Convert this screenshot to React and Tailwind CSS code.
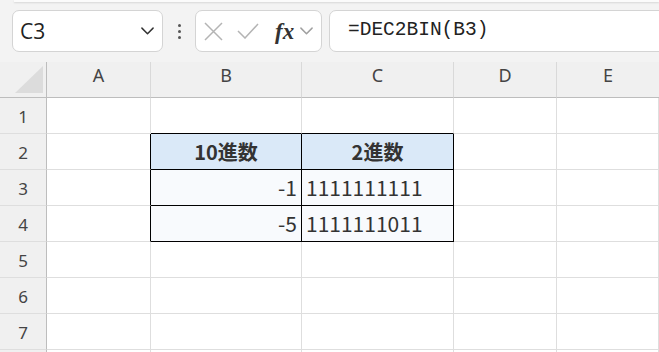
import React from "react";

const jp = { fontFamily: '"Noto Sans CJK JP", "Noto Sans", sans-serif' };

function Chevron({ className, color = "#333", w = 14 }) {
  return (
    <svg width={w} height={w * 0.6} viewBox="0 0 14 8" className={className}>
      <path d="M1 1 L7 7 L13 1" fill="none" stroke={color} strokeWidth="1.6" strokeLinecap="round" strokeLinejoin="round" />
    </svg>
  );
}

export default function App() {
  const cols = ["A", "B", "C", "D", "E"];
  const rows = [1, 2, 3, 4, 5, 6, 7, 8];
  const cellContent = (r, c) => {
    if (r === 2 && c === "B") return { text: "10進数", kind: "head" };
    if (r === 2 && c === "C") return { text: "2進数", kind: "head" };
    if (r === 3 && c === "B") return { text: "-1", kind: "num" };
    if (r === 4 && c === "B") return { text: "-5", kind: "num" };
    if (r === 3 && c === "C") return { text: "1111111111", kind: "txt" };
    if (r === 4 && c === "C") return { text: "1111111011", kind: "txt" };
    return null;
  };
  const inTable = (r, c) => r >= 2 && r <= 4 && (c === "B" || c === "C");

  return (
    <div className="w-[659px] h-[352px] overflow-hidden bg-white" style={{ fontFamily: '"Noto Sans", "Liberation Sans", sans-serif' }}>
      {/* toolbar */}
      <div className="h-[62px] bg-[#f3f3f3] flex flex-col overflow-hidden">
        <div className="h-[2px] ml-[14px] shrink-0 bg-[#fbfbfb] shadow-[0_1px_2px_rgba(0,0,0,0.12)]" />
        <div className="flex items-start pt-[8px] pl-[12px]">
          <div className="shrink-0 w-[151px] h-[42px] bg-white border border-[#d4d4d4] rounded-[7px] flex items-center justify-between pl-[7px] pr-[8px]">
            <span className="text-[21px] text-[#222] leading-none" style={{ fontFamily: '"Open Sans", "Noto Sans", sans-serif' }}>C3</span>
            <Chevron color="#333" w={13} />
          </div>
          <div className="shrink-0 w-[32px] h-[42px] flex flex-col items-center justify-center gap-[3px]">
            <div className="w-[3px] h-[3px] rounded-full bg-[#555]" />
            <div className="w-[3px] h-[3px] rounded-full bg-[#555]" />
            <div className="w-[3px] h-[3px] rounded-full bg-[#555]" />
          </div>
          <div className="shrink-0 w-[127px] h-[42px] bg-white border border-[#d4d4d4] rounded-[7px] flex items-center pl-[8px]">
            <svg width="19" height="19" viewBox="0 0 19 19">
              <path d="M1 1 L18 18 M18 1 L1 18" stroke="#b4b4b4" strokeWidth="1.5" fill="none" />
            </svg>
            <svg width="22" height="16" viewBox="0 0 22 16" className="ml-[14px]">
              <path d="M1 8 L8 15 L21 1" stroke="#b4b4b4" strokeWidth="1.5" fill="none" />
            </svg>
            <span className="ml-[16px] text-[23px] italic font-bold text-[#333] leading-none" style={{ fontFamily: '"Liberation Serif", serif' }}>fx</span>
            <Chevron className="ml-[6px]" color="#a0a0a0" w={13} />
          </div>
          <div className="shrink-0 ml-[7px] w-[345px] h-[42px] bg-white border border-[#d4d4d4] rounded-l-[7px] flex items-center pl-[18px]">
            <span className="text-[19.5px] text-[#222] leading-none" style={{ fontFamily: '"Liberation Mono", monospace' }}>=DEC2BIN(B3)</span>
          </div>
        </div>
      </div>

      {/* sheet */}
      <div className="grid grid-cols-[47px_104px_151px_152px_103px_1fr]">
        {/* header row */}
        <div className="h-[36px] bg-[#f0f0f0] border-r border-b border-[#bdbdbd] flex items-end justify-end pr-[3px] pb-[4px]">
          <svg width="28" height="27" viewBox="0 0 28 27">
            <path d="M28 0 L28 27 L0 27 Z" fill="#dcdcdc" />
          </svg>
        </div>
        {cols.map((c, i) => (
          <div
            key={c}
            className={`h-[36px] bg-[#f0f0f0] border-b border-[#bdbdbd] flex items-center justify-center pb-[8px] text-[18px] text-[#444] ${i < cols.length - 1 ? "border-r border-r-[#d9d9d9]" : ""}`}
          >
            {c}
          </div>
        ))}
        {rows.map((r) => (
          <React.Fragment key={r}>
            <div className="h-[36px] bg-[#f0f0f0] border-r border-r-[#bdbdbd] border-b border-b-[#dedede] flex items-center justify-center pt-[2px] text-[17px] text-[#444]">
              {r < 8 ? r : ""}
            </div>
            {cols.map((c) => {
              const content = cellContent(r, c);
              const t = inTable(r, c);
              const rightBlack = t || (c === "A" && r >= 2 && r <= 4);
              const bottomBlack = t || ((c === "B" || c === "C") && r === 1);
              let bg = "bg-white";
              if (t && r === 2) bg = "bg-[#dae9f8]";
              else if (t) bg = "bg-[#f8fafd]";
              return (
                <div
                  key={c}
                  className={`h-[36px] ${bg} border-r border-b ${rightBlack ? "border-r-black" : "border-r-[#dedede]"} ${bottomBlack ? "border-b-black" : "border-b-[#dedede]"} flex items-center overflow-hidden`}
                  style={jp}
                >
                  {content && content.kind === "head" && (
                    <span className="w-full text-center text-[20px] font-bold text-[#333]">{content.text}</span>
                  )}
                  {content && content.kind === "num" && (
                    <span className="w-full text-right pr-[4px] text-[21px] text-[#333]">{content.text}</span>
                  )}
                  {content && content.kind === "txt" && (
                    <span className="w-full text-left pl-[4px] text-[21px] text-[#333]">{content.text}</span>
                  )}
                </div>
              );
            })}
          </React.Fragment>
        ))}
      </div>
    </div>
  );
}
